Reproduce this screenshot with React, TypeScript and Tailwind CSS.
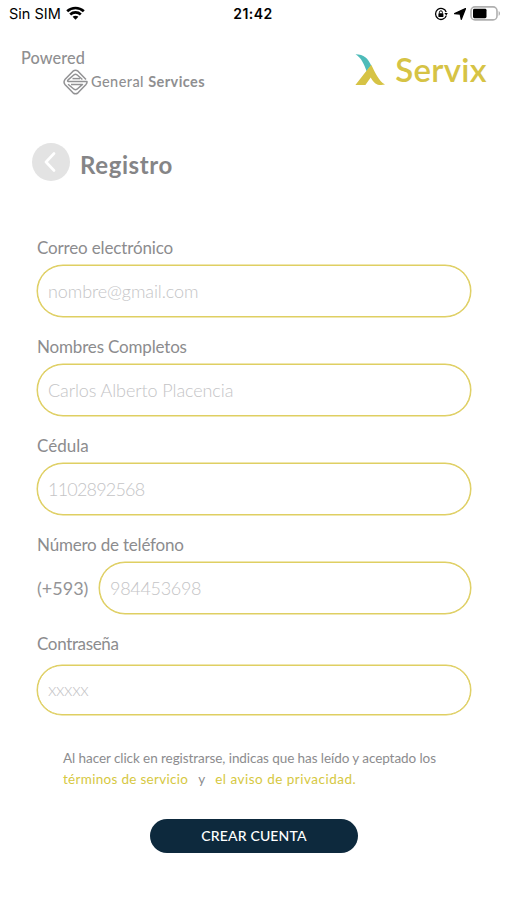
import clsx from 'clsx';
import { ReactNode } from 'react';

const wordmark = 'font-[Lato,sans-serif]';

function StatusBar() {
  return (
    <div className="flex h-7 items-center justify-between pl-[9px] pr-[6px] font-[Inter,sans-serif] text-black">
      <div className="flex w-[196px] items-center gap-[5px]">
        <span className="text-[14.5px]">Sin SIM</span>
        <svg className="mb-[2px]" width="19" height="14" viewBox="0 0 19 14" fill="none" stroke="black" strokeWidth="2.7">
          <path d="M1.2 5.2C5.8.9 13.2.9 17.8 5.2" />
          <path d="M4.2 8.4c2.9-2.7 7.7-2.7 10.6 0" />
          <path d="M6.6 10.8c1.6-1.5 4.2-1.5 5.8 0L9.5 13.7z" fill="black" stroke="none" />
        </svg>
      </div>
      <span className="mb-[2px] text-[14px] font-semibold tracking-[0.5px]">21:42</span>
      <div className="flex w-[200px] items-center justify-end">
        <svg className="mr-[6px]" width="14" height="14" viewBox="0 0 14 14" fill="none" stroke="black">
          <path d="M12.2 5A5.5 5.5 0 1 0 12.3 8.6" strokeWidth="1.3" />
          <path d="M10.4 6.1h3.4l-1.5 2.5z" fill="black" stroke="none" />
          <rect x="4.4" y="6.3" width="5" height="3.7" rx=".6" fill="black" stroke="none" />
          <path d="M5.4 6.5V5.3a1.5 1.5 0 0 1 3 0v1.2" strokeWidth="1" />
        </svg>
        <svg className="mr-[4px]" width="12" height="12" viewBox="0 0 12 12">
          <path d="M11.5.6 7.3 11.3 6.2 6.1.6 5.6z" fill="black" stroke="black" strokeWidth="1.3" strokeLinejoin="round" />
        </svg>
        <svg className="mb-px" width="31" height="15" viewBox="0 0 31 15">
          <rect x="1" y=".9" width="26" height="13" rx="4" fill="white" stroke="#b0b0b0" strokeWidth="1.6" />
          <rect x="3" y="2.8" width="13.5" height="9.4" rx="1.4" fill="black" />
          <path d="M28.6 5v4.8c1.9-.8 1.9-4 0-4.8z" fill="#b0b0b0" />
        </svg>
      </div>
    </div>
  );
}

function Header() {
  return (
    <header className={clsx('flex h-[72px] justify-between pl-[21px] pr-5', wordmark)}>
      <div className="pt-[19px] text-[#8f8f91]">
        <div className="h-[22px] text-[16.3px] font-medium leading-[21px] tracking-[0.1px]">Powered</div>
        <div className="flex items-center gap-[3px] pl-[42px]">
          <svg width="25" height="26" viewBox="0 0 25 26" fill="none" stroke="#929294" strokeWidth="1.5" strokeLinejoin="round">
            <path d="M23 10.5 15 2.2Q12.5.2 10 2.2L1.9 10.6Q.2 13 1.9 15.4L10 23.8q2.5 2 5 0l8-8.4q1.2-1.5 1-2.9H5.5q-1.6-.1-.4-1.6l5.9-5.1q1.5-1.2 3 0l5.4 4.7" />
            <path d="M17 9.6H9.5" />
            <path d="M8 15.4h11.5L14 20.2q-1.5 1.2-3 0l-5.9-5" />
          </svg>
          <span className="whitespace-nowrap text-[14.5px] font-medium tracking-[0.45px]">
            General <b>Services</b>
          </span>
        </div>
      </div>
      <div className="flex items-start gap-[9px] pt-[21px] text-[#d6c345]">
        <svg className="mt-[5px]" width="31" height="32" viewBox="0 0 31 32">
          <path d="M.5.3C9 .3 13 4.5 16.2 11.5L11.6 17.3C9 10 6.5 4 .5.3z" fill="#4dbbb9" />
          <path d="M16.2 10.8C20 18 23.5 27 30 30.6c-7.5 1.6-11-1.2-14.3-7.2L10.4 31H.4z" fill="#d6c345" />
        </svg>
        <span className="text-[33px] font-semibold leading-10 tracking-[0.3px]">Servix</span>
      </div>
    </header>
  );
}

type FieldProps = {
  label: string;
  placeholder: string;
  type?: string;
  prefix?: ReactNode;
  last?: boolean;
  labelClass?: string;
  inputClass?: string;
};

function Field({ label, placeholder, type = 'text', prefix, last, labelClass, inputClass }: FieldProps) {
  return (
    <label className={clsx('flex flex-col', last ? 'gap-[10px]' : 'gap-[6px]')}>
      <span className={clsx('h-6 text-[17px] leading-[25px] text-[#8c8c8e]', labelClass)}>{label}</span>
      <div className="flex items-center">
        {prefix}
        <input
          type={type}
          placeholder={placeholder}
          className={clsx(
            'w-0 flex-1 rounded-[26px] border border-[#dfcf62] bg-white px-[10px] text-[18px] font-light text-gray-600 shadow-[0_0_0_0.5px_#dfcf62] outline-none placeholder:text-[#c4c4c6]',
            last ? 'h-[50px]' : 'h-[52px]',
            inputClass,
          )}
        />
      </div>
    </label>
  );
}

export default function App() {
  return (
    <div className="h-[900px] w-[507px] overflow-hidden bg-white font-[Lato,sans-serif]">
      <StatusBar />
      <Header />
      <div className="mt-[42px] flex items-center gap-[10px] pl-8">
        <button className="flex size-[38px] items-center justify-center rounded-full bg-[#e3e3e3]">
          <svg width="16" height="20" viewBox="0 0 16 20" fill="none" stroke="white" strokeWidth="2.6" strokeLinecap="round" strokeLinejoin="round">
            <path d="M11 1.5 3 10l8 8.5" />
          </svg>
        </button>
        <h1 className="pt-[7px] text-[24px] font-bold leading-8 tracking-[0.6px] text-[#858587]">Registro</h1>
      </div>

      <form className="mt-[54px] flex flex-col gap-[17px] pl-[37px] pr-9">
        <Field label="Correo electrónico" placeholder="nombre@gmail.com" labelClass="tracking-[-0.15px]" inputClass="tracking-[-0.1px]" />
        <Field label="Nombres Completos" placeholder="Carlos Alberto Placencia" labelClass="tracking-[-0.17px]" inputClass="tracking-[-0.09px]" />
        <Field label="Cédula" placeholder="1102892568" inputClass="tracking-[-0.8px]" />
        <Field
          label="Número de teléfono"
          placeholder="984453698"
          labelClass="tracking-[-0.2px]"
          inputClass="tracking-[-0.3px]"
          prefix={<span className="w-[62px] text-[18px] text-[#949496]">(+593)</span>}
        />
        <Field label="Contraseña" placeholder="xxxxx" labelClass="tracking-[-0.35px]" inputClass="pb-[3px] tracking-[-0.4px]" last />
      </form>

      <p className="mt-[33px] whitespace-nowrap pl-[63px] text-[13.5px] leading-[21px] tracking-[-0.07px] text-[#8c8c8e]">
        Al hacer click en registrarse, indicas que has leído y aceptado los
        <br />
        <a className="tracking-[0.3px] text-[#d6c83f]">términos de servicio</a>
        <span className="mx-[10px]">y</span>
        <a className="tracking-[0.5px] text-[#d6c83f]">el aviso de privacidad.</a>
      </p>

      <button className="ml-[150px] mt-[29px] flex h-[34px] w-52 items-center justify-center rounded-full bg-[#0d293d] pb-px text-[14px] font-medium tracking-[0.15px] text-white">
        CREAR CUENTA
      </button>
    </div>
  );
}
